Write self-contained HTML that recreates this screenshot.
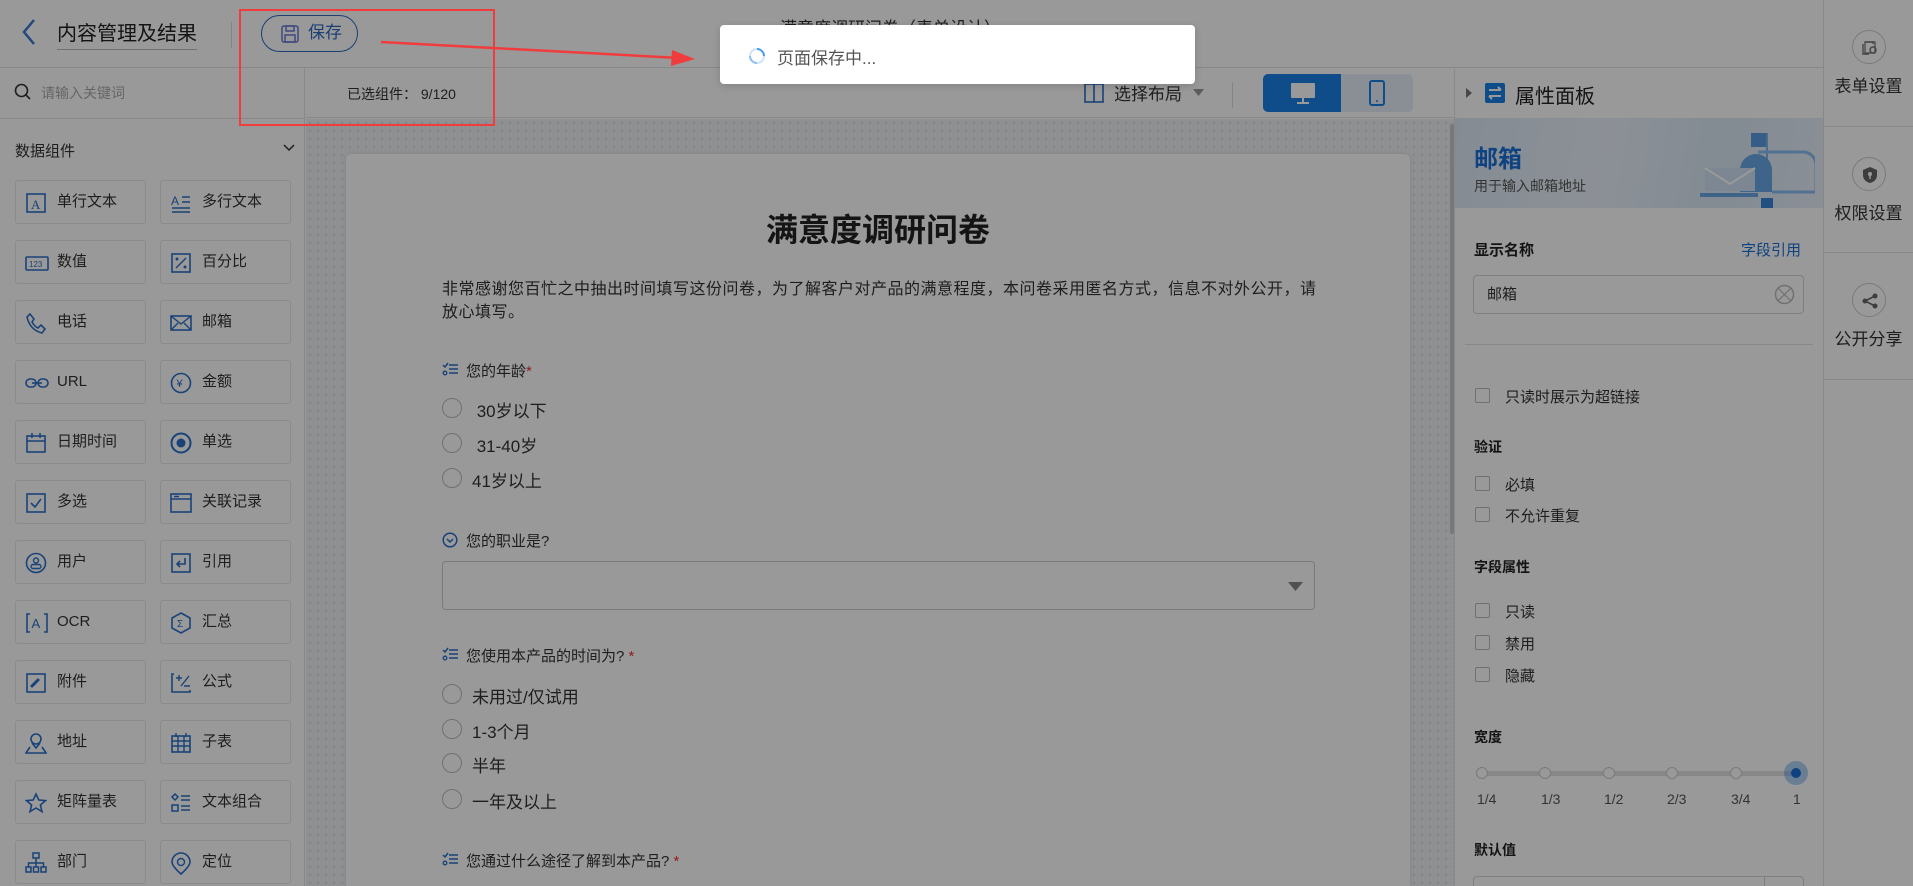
<!DOCTYPE html>
<html style="width:1913px;height:886px;overflow:hidden"><head><meta charset="utf-8">
<style>
*{box-sizing:border-box;margin:0;padding:0}
body{width:1913px;height:886px;overflow:hidden;position:relative;background:#fff;font-family:"Liberation Sans","Noto Sans CJK SC",sans-serif;color:#333}
#wrap{position:absolute;left:0;top:0;width:1913px;height:886px;overflow:hidden}
.a{position:absolute}
.btn{position:absolute;width:131px;height:44px;border:1px solid #e6e8ec;border-radius:3px;background:#fff;font-size:15px;color:#333;line-height:42px;padding-left:41px}
.btn svg{position:absolute;left:9px;top:11px}
.q{position:absolute;left:442px;font-size:15px;color:#333}
.q svg{position:absolute;left:0;top:2px}
.q span{margin-left:24px}
.opt{position:absolute;left:442px;font-size:17px;color:#333}
.opt i{position:absolute;left:0;top:1px;width:20px;height:20px;border:1px solid #bbb;border-radius:50%}
.opt span{position:absolute;left:30px;white-space:nowrap}
.cb{position:absolute;left:1475px;font-size:15px;color:#333;white-space:nowrap}
.cb i{position:absolute;left:0;top:2px;width:15px;height:15px;border:1px solid #bbb;border-radius:2px}
.cb span{margin-left:30px}
.lab{position:absolute;left:1474px;font-size:15px;font-weight:bold;color:#222}
.side{position:absolute;left:1824px;width:89px;text-align:center;font-size:17px;color:#333}
.side .c{width:34px;height:34px;border:1px solid #ccc;border-radius:50%;margin:0 auto 8px;position:relative}
</style></head><body><div id="wrap">
<!-- top bar -->
<div class="a" style="left:0;top:0;width:1824px;height:68px;background:#fff;border-bottom:1px solid #e3e3e3"></div>
<svg class="a" style="left:20px;top:18px" width="18" height="28"><path d="M14 2 L4 14 L14 26" stroke="#3b78d0" stroke-width="2.5" fill="none"/></svg>
<div class="a" style="left:57px;top:17px;font-size:20px;color:#222;border-bottom:1px solid #bbb;padding-bottom:3px">内容管理及结果</div>
<div class="a" style="left:231px;top:22px;width:1px;height:26px;background:#ddd"></div>
<div class="a" style="left:261px;top:15px;width:97px;height:37px;border:1.5px solid #2f6bc0;border-radius:19px;color:#2f6bc0;font-size:17px;line-height:34px;padding-left:46px">保存
<svg class="a" style="left:19px;top:9px" width="18" height="18"><rect x="1" y="1" width="16" height="16" rx="2" fill="none" stroke="#6c7bd0" stroke-width="1.5"/><rect x="5" y="1" width="8" height="5" fill="none" stroke="#6c7bd0" stroke-width="1.5"/><rect x="4" y="10" width="10" height="7" fill="none" stroke="#6c7bd0" stroke-width="1.5"/></svg></div>
<div class="a" style="left:780px;top:14px;font-size:17px;color:#333">满意度调研问卷（表单设计）</div>
<!-- left panel -->
<div class="a" style="left:0;top:68px;width:305px;height:818px;background:#fff;border-right:1px solid #e3e3e3"></div>
<div class="a" style="left:0;top:118px;width:305px;height:1px;background:#e3e3e3"></div>
<svg class="a" style="left:14px;top:83px" width="18" height="18"><circle cx="7.5" cy="7.5" r="6" stroke="#333" stroke-width="1.6" fill="none"/><path d="M12 12 L16 16" stroke="#333" stroke-width="1.6"/></svg>
<div class="a" style="left:41px;top:83px;font-size:14px;color:#aaa">请输入关键词</div>
<div class="a" style="left:15px;top:140px;font-size:15px;color:#333">数据组件</div>
<svg class="a" style="left:283px;top:144px" width="12" height="8"><path d="M1 1 L6 6 L11 1" stroke="#333" stroke-width="1.5" fill="none"/></svg>

<div class="btn" style="left:15px;top:180px"><svg width="22" height="22"><rect x="2" y="2" width="18" height="18" fill="none" stroke="#2a6fc9" stroke-width="1.6"/><text x="6" y="17" font-size="13" fill="#2a6fc9" font-family="Liberation Serif">A</text></svg>单行文本</div>
<div class="btn" style="left:160px;top:180px"><svg width="22" height="22"><text x="1" y="13" font-size="12" fill="#2a6fc9">A</text><path d="M12 5h8M12 10h8M2 16h18M2 20h18" stroke="#2a6fc9" stroke-width="1.6"/></svg>多行文本</div>
<div class="btn" style="left:15px;top:240px"><svg width="24" height="22"><rect x="1" y="5" width="22" height="13" rx="1" fill="none" stroke="#2a6fc9" stroke-width="1.6"/><text x="4" y="15" font-size="8" fill="#2a6fc9">123</text></svg>数值</div>
<div class="btn" style="left:160px;top:240px"><svg width="22" height="22"><rect x="2" y="2" width="18" height="18" fill="none" stroke="#2a6fc9" stroke-width="1.6"/><path d="M6 16 L16 6" stroke="#2a6fc9" stroke-width="1.4"/><circle cx="7" cy="7" r="1.5" fill="#2a6fc9"/><circle cx="15" cy="15" r="1.5" fill="#2a6fc9"/></svg>百分比</div>
<div class="btn" style="left:15px;top:300px"><svg width="22" height="22"><path d="M5 2 L9 7 L7 10 Q10 15 13 16 L16 13 L20 17 L17 21 Q5 18 2 5 Z" fill="none" stroke="#2a6fc9" stroke-width="1.6"/></svg>电话</div>
<div class="btn" style="left:160px;top:300px"><svg width="22" height="22"><rect x="1" y="4" width="20" height="14" fill="none" stroke="#2a6fc9" stroke-width="1.6"/><path d="M1 4 L11 12 L21 4 M1 18 L8 11 M21 18 L14 11" stroke="#2a6fc9" stroke-width="1.4" fill="none"/></svg>邮箱</div>
<div class="btn" style="left:15px;top:360px"><svg width="24" height="22"><rect x="1" y="7" width="10" height="8" rx="4" fill="none" stroke="#2a6fc9" stroke-width="1.6"/><rect x="13" y="7" width="10" height="8" rx="4" fill="none" stroke="#2a6fc9" stroke-width="1.6"/><path d="M7 11h10" stroke="#2a6fc9" stroke-width="1.6"/></svg>URL</div>
<div class="btn" style="left:160px;top:360px"><svg width="22" height="22"><circle cx="11" cy="11" r="9.5" fill="none" stroke="#2a6fc9" stroke-width="1.6"/><text x="6.5" y="15" font-size="11" fill="#2a6fc9">¥</text></svg>金额</div>
<div class="btn" style="left:15px;top:420px"><svg width="22" height="22"><rect x="2" y="4" width="18" height="16" fill="none" stroke="#2a6fc9" stroke-width="1.6"/><path d="M2 9h18M7 1v5M15 1v5" stroke="#2a6fc9" stroke-width="1.6"/></svg>日期时间</div>
<div class="btn" style="left:160px;top:420px"><svg width="22" height="22"><circle cx="11" cy="11" r="9.5" fill="none" stroke="#2a6fc9" stroke-width="2"/><circle cx="11" cy="11" r="4.5" fill="#2a6fc9"/></svg>单选</div>
<div class="btn" style="left:15px;top:480px"><svg width="22" height="22"><rect x="2" y="2" width="18" height="18" fill="none" stroke="#2a6fc9" stroke-width="1.6"/><path d="M6 11 L10 15 L16 7" stroke="#2a6fc9" stroke-width="1.6" fill="none"/></svg>多选</div>
<div class="btn" style="left:160px;top:480px"><svg width="22" height="22"><rect x="1" y="2" width="20" height="18" fill="none" stroke="#2a6fc9" stroke-width="1.6"/><path d="M1 7h20M4 4.5h5" stroke="#2a6fc9" stroke-width="1.6"/></svg>关联记录</div>
<div class="btn" style="left:15px;top:540px"><svg width="22" height="22"><circle cx="11" cy="11" r="9.5" fill="none" stroke="#2a6fc9" stroke-width="1.6"/><circle cx="11" cy="8.5" r="2.5" fill="none" stroke="#2a6fc9" stroke-width="1.4"/><rect x="6" y="12.5" width="10" height="4" rx="2" fill="none" stroke="#2a6fc9" stroke-width="1.4"/></svg>用户</div>
<div class="btn" style="left:160px;top:540px"><svg width="22" height="22"><rect x="2" y="2" width="18" height="18" fill="none" stroke="#2a6fc9" stroke-width="1.6"/><path d="M15 6v6H7M10 9l-3 3 3 3" stroke="#2a6fc9" stroke-width="1.6" fill="none"/></svg>引用</div>
<div class="btn" style="left:15px;top:600px"><svg width="24" height="22"><path d="M5 2H2v18h3M19 2h3v18h-3" stroke="#2a6fc9" stroke-width="1.6" fill="none"/><text x="6.5" y="16" font-size="13" fill="#2a6fc9">A</text></svg>OCR</div>
<div class="btn" style="left:160px;top:600px"><svg width="22" height="22"><path d="M11 1 L20 6 L20 16 L11 21 L2 16 L2 6 Z" fill="none" stroke="#2a6fc9" stroke-width="1.6"/><text x="7" y="15" font-size="10" fill="#2a6fc9">Σ</text></svg>汇总</div>
<div class="btn" style="left:15px;top:660px"><svg width="22" height="22"><rect x="2" y="2" width="18" height="18" fill="none" stroke="#2a6fc9" stroke-width="1.6"/><path d="M7 14 L13 8" stroke="#2a6fc9" stroke-width="3" stroke-linecap="round"/></svg>附件</div>
<div class="btn" style="left:160px;top:660px"><svg width="22" height="22"><path d="M4 2H2v18h18v-2" stroke="#2a6fc9" stroke-width="1.6" fill="none"/><path d="M6 6h6M9 3v6M11 14 L19 4M14 14h6" stroke="#2a6fc9" stroke-width="1.4"/></svg>公式</div>
<div class="btn" style="left:15px;top:720px"><svg width="22" height="22"><circle cx="11" cy="7" r="5" fill="none" stroke="#2a6fc9" stroke-width="1.6"/><path d="M7 11 L11 16 L15 11M5 15 L1 21 H21 L17 15" stroke="#2a6fc9" stroke-width="1.6" fill="none"/></svg>地址</div>
<div class="btn" style="left:160px;top:720px"><svg width="22" height="22"><rect x="2" y="4" width="18" height="16" fill="none" stroke="#2a6fc9" stroke-width="1.6"/><path d="M2 9h18M2 14h18M8 4v16M14 4v16M6 1v4M16 1v4" stroke="#2a6fc9" stroke-width="1.4"/></svg>子表</div>
<div class="btn" style="left:15px;top:780px"><svg width="22" height="22"><path d="M11 2 L13.8 8 L20.5 8.6 L15.4 13 L17 19.6 L11 16 L5 19.6 L6.6 13 L1.5 8.6 L8.2 8 Z" fill="none" stroke="#2a6fc9" stroke-width="1.6"/></svg>矩阵量表</div>
<div class="btn" style="left:160px;top:780px"><svg width="22" height="22"><path d="M5 2 L8 5 L5 8 L2 5Z" fill="none" stroke="#2a6fc9" stroke-width="1.5"/><rect x="2" y="13" width="6" height="6" fill="none" stroke="#2a6fc9" stroke-width="1.5"/><path d="M11 4h9M11 8h9M11 14h9M11 18h9" stroke="#2a6fc9" stroke-width="1.4"/></svg>文本组合</div>
<div class="btn" style="left:15px;top:840px"><svg width="22" height="22"><rect x="8" y="1" width="6" height="5" fill="none" stroke="#2a6fc9" stroke-width="1.5"/><rect x="1" y="15" width="5" height="5" fill="none" stroke="#2a6fc9" stroke-width="1.5"/><rect x="8.5" y="15" width="5" height="5" fill="none" stroke="#2a6fc9" stroke-width="1.5"/><rect x="16" y="15" width="5" height="5" fill="none" stroke="#2a6fc9" stroke-width="1.5"/><path d="M11 6v9M3.5 15v-4h15v4" stroke="#2a6fc9" stroke-width="1.5" fill="none"/></svg>部门</div>
<div class="btn" style="left:160px;top:840px"><svg width="22" height="24"><path d="M11 22 Q2 14 2 10 A9 9 0 0 1 20 10 Q20 14 11 22Z" fill="none" stroke="#2a6fc9" stroke-width="1.6"/><circle cx="11" cy="10" r="3.5" fill="none" stroke="#2a6fc9" stroke-width="1.4"/></svg>定位</div>

<!-- center toolbar -->
<div class="a" style="left:306px;top:69px;width:1148px;height:49px;background:#fff;border-bottom:1px solid #e3e3e3"></div>
<div class="a" style="left:347px;top:84px;font-size:14px;color:#333">已选组件：&nbsp;9/120</div>
<svg class="a" style="left:1084px;top:83px" width="20" height="20"><rect x="1" y="1" width="18" height="18" fill="none" stroke="#2a6fc9" stroke-width="1.6"/><path d="M10 1v18" stroke="#2a6fc9" stroke-width="1.6"/></svg>
<div class="a" style="left:1114px;top:80px;font-size:17px;color:#333">选择布局</div>
<svg class="a" style="left:1193px;top:89px" width="11" height="7"><path d="M0 0h11L5.5 7Z" fill="#999"/></svg>
<div class="a" style="left:1232px;top:82px;width:1px;height:26px;background:#ddd"></div>
<div class="a" style="left:1263px;top:74px;width:78px;height:38px;background:#1a7fe6;border-radius:5px 0 0 5px"></div>
<svg class="a" style="left:1290px;top:82px" width="26" height="22"><rect x="1" y="1" width="24" height="15" rx="1" fill="#fff"/><path d="M13 16v4M7 21h12" stroke="#fff" stroke-width="2"/></svg>
<div class="a" style="left:1341px;top:74px;width:72px;height:38px;background:#e6eefa;border-radius:0 5px 5px 0"></div>
<svg class="a" style="left:1369px;top:80px" width="16" height="26"><rect x="1" y="1" width="14" height="24" rx="2" fill="none" stroke="#1a7fe6" stroke-width="2"/><circle cx="8" cy="21" r="1" fill="#1a7fe6"/></svg>
<!-- canvas -->
<div class="a" style="left:306px;top:119px;width:1148px;height:767px;background-color:#eef0f3;background-image:radial-gradient(#d6d9de 1px,transparent 1.2px);background-size:8px 8px"></div>
<div class="a" style="left:1450px;top:124px;width:4px;height:410px;background:#c8c8c8;border-radius:2px"></div>
<div class="a" style="left:346px;top:154px;width:1064px;height:732px;background:#fff;border-radius:5px 5px 0 0;box-shadow:0 0 4px rgba(0,0,0,.1)"></div>
<div class="a" style="left:346px;top:205px;width:1064px;text-align:center;font-size:32px;font-weight:bold;color:#222">满意度调研问卷</div>
<div class="a" style="left:442px;top:278px;width:882px;font-size:16px;line-height:23px;letter-spacing:0.5px;color:#333">非常感谢您百忙之中抽出时间填写这份问卷，为了解客户对产品的满意程度，本问卷采用匿名方式，信息不对外公开，请放心填写。</div>

<div class="q" style="top:360px"><svg width="16" height="14"><path d="M1 3l2 2 3-4M7 3h9M7 7h9M7 11h9" stroke="#2a6fc9" stroke-width="1.5" fill="none"/><circle cx="3" cy="11" r="1.8" fill="none" stroke="#2a6fc9" stroke-width="1.3"/></svg><span>您的年龄<b style="color:#e33;font-weight:normal">*</b></span></div>
<div class="opt" style="top:397px"><i></i><span>&nbsp;30岁以下</span></div>
<div class="opt" style="top:432px"><i></i><span>&nbsp;31-40岁</span></div>
<div class="opt" style="top:467px"><i></i><span>41岁以上</span></div>
<div class="q" style="top:530px"><svg width="16" height="16"><circle cx="8" cy="8" r="6.8" fill="none" stroke="#2a6fc9" stroke-width="1.5"/><path d="M5 7l3 3 3-3" stroke="#2a6fc9" stroke-width="1.5" fill="none"/></svg><span>您的职业是?</span></div>
<div class="a" style="left:442px;top:561px;width:873px;height:49px;border:1px solid #ccc;border-radius:4px"></div>
<svg class="a" style="left:1288px;top:582px" width="15" height="9"><path d="M0 0h15L7.5 9Z" fill="#888"/></svg>
<div class="q" style="top:645px"><svg width="16" height="14"><path d="M1 3l2 2 3-4M7 3h9M7 7h9M7 11h9" stroke="#2a6fc9" stroke-width="1.5" fill="none"/><circle cx="3" cy="11" r="1.8" fill="none" stroke="#2a6fc9" stroke-width="1.3"/></svg><span>您使用本产品的时间为? <b style="color:#e33;font-weight:normal">*</b></span></div>
<div class="opt" style="top:683px"><i></i><span>未用过/仅试用</span></div>
<div class="opt" style="top:718px"><i></i><span>1-3个月</span></div>
<div class="opt" style="top:752px"><i></i><span>半年</span></div>
<div class="opt" style="top:788px"><i></i><span>一年及以上</span></div>
<div class="q" style="top:850px"><svg width="16" height="14"><path d="M1 3l2 2 3-4M7 3h9M7 7h9M7 11h9" stroke="#2a6fc9" stroke-width="1.5" fill="none"/><circle cx="3" cy="11" r="1.8" fill="none" stroke="#2a6fc9" stroke-width="1.3"/></svg><span>您通过什么途径了解到本产品? <b style="color:#e33;font-weight:normal">*</b></span></div>

<!-- right panel -->
<div class="a" style="left:1454px;top:69px;width:370px;height:817px;background:#fff;border-left:1px solid #e3e3e3"></div>
<svg class="a" style="left:1466px;top:88px" width="6" height="10"><path d="M0 0L6 5L0 10Z" fill="#777"/></svg>
<svg class="a" style="left:1485px;top:83px" width="20" height="20"><rect width="20" height="20" rx="2" fill="#1a7fe6"/><path d="M4 7h12M13 4l3 3M16 13H4M7 16l-3-3" stroke="#fff" stroke-width="2" fill="none"/></svg>
<div class="a" style="left:1515px;top:80px;font-size:20px;color:#222">属性面板</div>
<div class="a" style="left:1455px;top:118px;width:369px;height:90px;background:linear-gradient(100deg,#dde9f6 0%,#e9f1fa 40%,#dbe8f5 70%,#e6eff9 100%)"></div>
<svg class="a" style="left:1700px;top:130px" width="115" height="78"><rect x="51" y="3" width="16" height="14" fill="#5a9be0"/><path d="M67 3v40" stroke="#7ab2ea" stroke-width="2"/><path d="M40 62V40a16 16 0 0 1 32 0v22Z" fill="#6aa7e6"/><path d="M58 22h45a13 13 0 0 1 13 13v27H72" fill="none" stroke="#8abdf0" stroke-width="3"/><path d="M5 38h50v23H5Z" fill="#cfe2f6"/><path d="M5 38l25 16 25-16" stroke="#fff" stroke-width="2" fill="none"/><rect x="0" y="63" width="58" height="4" fill="#6aa7e6"/><rect x="61" y="68" width="12" height="10" fill="#3a86d6"/></svg>
<div class="a" style="left:1474px;top:139px;font-size:24px;font-weight:bold;color:#1a6fd6">邮箱</div>
<div class="a" style="left:1474px;top:176px;font-size:14px;color:#555">用于输入邮箱地址</div>
<div class="lab" style="top:239px">显示名称</div>
<div class="a" style="left:1741px;top:239px;font-size:15px;color:#1a6fd6">字段引用</div>
<div class="a" style="left:1473px;top:275px;width:331px;height:39px;border:1px solid #d4d4d4;border-radius:4px;font-size:15px;line-height:37px;padding-left:13px;color:#333">邮箱</div>
<svg class="a" style="left:1774px;top:284px" width="21" height="21"><circle cx="10.5" cy="10.5" r="9" fill="none" stroke="#bbb" stroke-width="1.5"/><path d="M4 4l13 13M4 17L17 4" stroke="#bbb" stroke-width="1.2"/></svg>
<div class="a" style="left:1465px;top:344px;width:348px;height:1px;background:#e3e3e3"></div>
<div class="cb" style="top:386px"><i></i><span>只读时展示为超链接</span></div>
<div class="lab" style="top:437px;font-size:14px">验证</div>
<div class="cb" style="top:474px"><i></i><span>必填</span></div>
<div class="cb" style="top:505px"><i></i><span>不允许重复</span></div>
<div class="lab" style="top:557px;font-size:14px">字段属性</div>
<div class="cb" style="top:601px"><i></i><span>只读</span></div>
<div class="cb" style="top:633px"><i></i><span>禁用</span></div>
<div class="cb" style="top:665px"><i></i><span>隐藏</span></div>
<div class="lab" style="top:727px;font-size:14px">宽度</div>
<div class="a" style="left:1482px;top:771px;width:314px;height:5px;background:#e2e2e2;border-radius:3px"></div>
<div class="a" style="left:1476px;top:767px;width:12px;height:12px;border:1px solid #ccc;border-radius:50%;background:#fff"></div>
<div class="a" style="left:1539px;top:767px;width:12px;height:12px;border:1px solid #ccc;border-radius:50%;background:#fff"></div>
<div class="a" style="left:1603px;top:767px;width:12px;height:12px;border:1px solid #ccc;border-radius:50%;background:#fff"></div>
<div class="a" style="left:1666px;top:767px;width:12px;height:12px;border:1px solid #ccc;border-radius:50%;background:#fff"></div>
<div class="a" style="left:1730px;top:767px;width:12px;height:12px;border:1px solid #ccc;border-radius:50%;background:#fff"></div>
<div class="a" style="left:1784px;top:761px;width:24px;height:24px;border-radius:50%;background:rgba(26,127,230,.35)"></div>
<div class="a" style="left:1791px;top:768px;width:10px;height:10px;border-radius:50%;background:#1a6fd6"></div>
<div class="a" style="left:1477px;top:791px;width:340px;font-size:14px;color:#555">
<span class="a" style="left:0">1/4</span><span class="a" style="left:64px">1/3</span><span class="a" style="left:127px">1/2</span><span class="a" style="left:190px">2/3</span><span class="a" style="left:254px">3/4</span><span class="a" style="left:316px">1</span></div>
<div class="lab" style="top:840px;font-size:14px">默认值</div>
<div class="a" style="left:1473px;top:876px;width:331px;height:10px;border:1px solid #d4d4d4;border-bottom:none;border-radius:4px 4px 0 0"></div>
<div class="a" style="left:1764px;top:876px;width:1px;height:10px;background:#d4d4d4"></div>

<!-- right sidebar -->
<div class="a" style="left:1823px;top:0;width:90px;height:886px;background:#fff;border-left:1px solid #e3e3e3"></div>
<div class="a" style="left:1824px;top:126px;width:89px;height:1px;background:#e3e3e3"></div>
<div class="a" style="left:1824px;top:252px;width:89px;height:1px;background:#e3e3e3"></div>
<div class="a" style="left:1824px;top:379px;width:89px;height:1px;background:#e3e3e3"></div>
<div class="side" style="top:30px"><div class="c"><svg class="a" style="left:9px;top:8px" width="16" height="16"><path d="M3 3h8v2M1 5v10h6" stroke="#777" stroke-width="1.4" fill="none"/><rect x="3" y="3" width="10" height="11" fill="none" stroke="#777" stroke-width="1.3"/><circle cx="11" cy="11" r="3" fill="none" stroke="#777" stroke-width="1.5"/></svg></div>表单设置</div>
<div class="side" style="top:157px"><div class="c"><svg class="a" style="left:9px;top:8px" width="16" height="18"><path d="M8 1L15 4v5q0 6-7 8q-7-2-7-8V4Z" fill="#666"/><circle cx="8" cy="8" r="2" fill="#fff"/><path d="M8 9v4" stroke="#fff" stroke-width="1.5"/></svg></div>权限设置</div>
<div class="side" style="top:283px"><div class="c"><svg class="a" style="left:8px;top:8px" width="18" height="18"><circle cx="14" cy="4" r="2.5" fill="#666"/><circle cx="4" cy="9" r="2.5" fill="#666"/><circle cx="14" cy="14" r="2.5" fill="#666"/><path d="M14 4L4 9L14 14" stroke="#666" stroke-width="1.6" fill="none"/></svg></div>公开分享</div>

<!-- overlay -->
<div class="a" style="left:0;top:0;width:1913px;height:886px;background:rgba(0,0,0,0.4)"></div>
<!-- dialog -->
<div class="a" style="left:720px;top:25px;width:475px;height:59px;background:#fff;border-radius:4px;box-shadow:0 2px 8px rgba(0,0,0,.15)"></div>
<svg class="a" style="left:748px;top:47px" width="18" height="18"><circle cx="9" cy="9" r="7" fill="none" stroke="#cfe3fb" stroke-width="2"/><path d="M9 2A7 7 0 0 1 16 9" stroke="#4a9cf0" stroke-width="2" fill="none"/><path d="M2 9A7 7 0 0 0 9 16" stroke="#8cc0f5" stroke-width="2" fill="none"/></svg>
<div class="a" style="left:777px;top:44px;font-size:17px;color:#555">页面保存中...</div>
<!-- annotation -->
<div class="a" style="left:239px;top:9px;width:256px;height:117px;border:2.5px solid #f03c3c"></div>
<svg class="a" style="left:0;top:0" width="800" height="100"><path d="M381 42 L680 58" stroke="#f03c3c" stroke-width="2.5"/><path d="M672 50 L695 59 L671 66 Z" fill="#f03c3c"/></svg>
</div></body></html>
